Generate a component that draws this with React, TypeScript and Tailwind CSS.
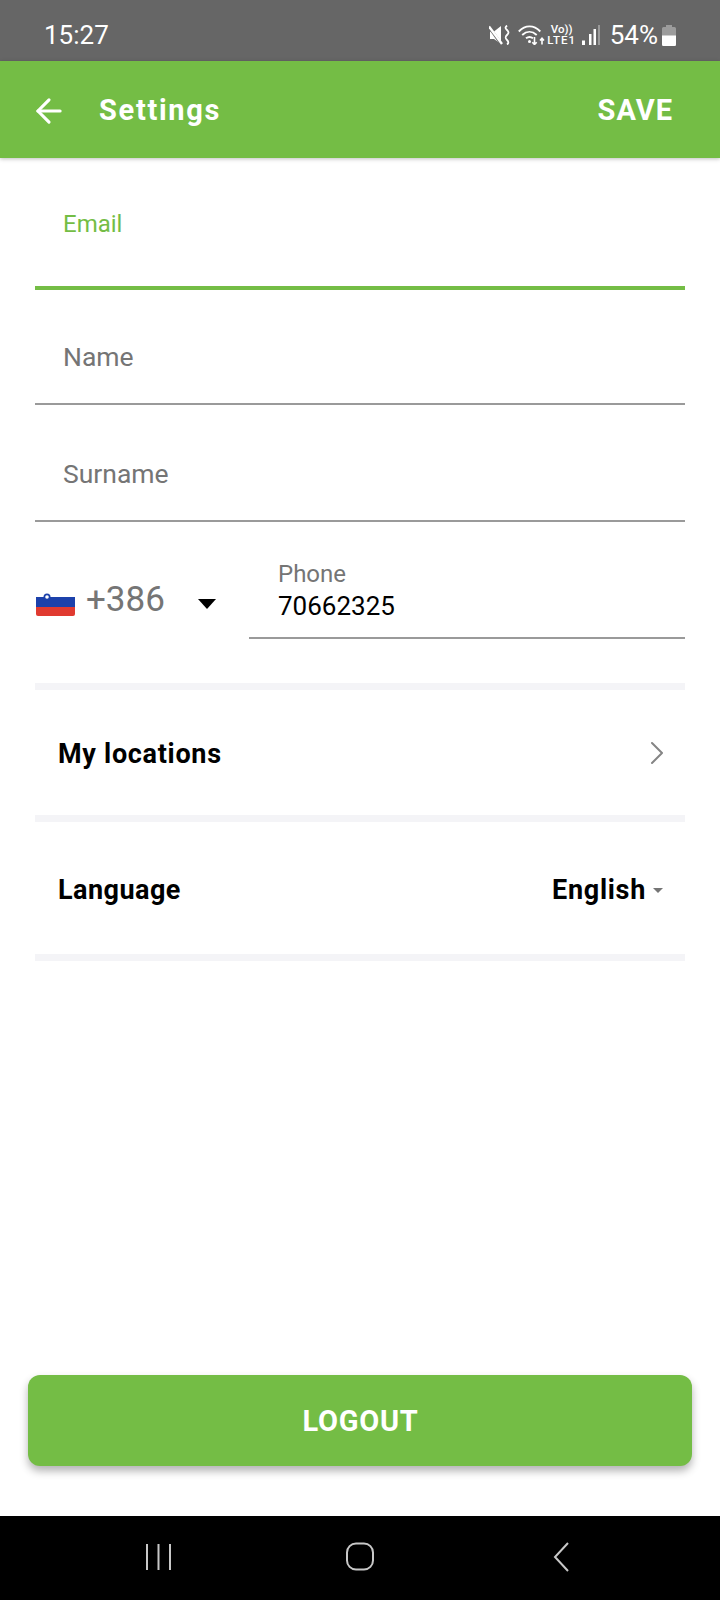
import { ArrowLeft, ChevronRight } from "lucide-react";

const Field = ({ label, className }: { label: string; className: string }) => {
  return (
    <div className={`mx-[35px] border-b-2 border-[#9a9a9a] pl-[28px] ${className}`}>
      <span className="block text-[26.5px] leading-[30px] text-[#757575]">{label}</span>
    </div>
  );
};

const Divider = () => <div className="mx-[35px] h-[7px] bg-[#f4f4f7]" />;

const StatusIcons = () => {
  return (
    <div className="flex items-center">
      {/* muted */}
      <svg width="21" height="20" viewBox="0 0 21 20" fill="none" className="mr-[8px]">
        <path d="M1 6.500h4l7-5.500v18l-7-5H1z" fill="#fff" />
        <path d="M0.500 2.500l12 17" stroke="#666" strokeWidth="3" />
        <path d="M0 1.500l13 17.500" stroke="#fff" strokeWidth="2.400" />
        <path d="M18 0.500c-2 1.800-2 2.500 0 4.500s2 3 0 5-2 3 0 5 1.500 3.500 0 4.500" stroke="#fff" strokeWidth="1.800" />
      </svg>
      {/* wifi */}
      <svg width="27" height="20" viewBox="0 0 27 20" fill="none" className="mr-[4px]">
        <path d="M0.800 6.500c6.500-6.800 15-6.800 21.500 0" stroke="#fff" strokeWidth="1.900" />
        <path d="M4.200 10c4.500-4.200 10-4.200 14.500 0" stroke="#fff" strokeWidth="1.900" />
        <path d="M8 13.300c2.500-2 4.500-2 7 0" stroke="#fff" strokeWidth="1.900" />
        <circle cx="11.500" cy="16.500" r="1.500" fill="#fff" />
        <path d="M16.500 12v7.500m-2.200-2.200l2.200 2.200 2.200-2.200M24 19.500v-6m-2 2l2-2.200 2 2.200" stroke="#fff" strokeWidth="1.600" />
      </svg>
      <div className="mr-[7px] flex w-[26px] flex-col items-center text-[11.500px] leading-[11.500px] font-medium text-white">
        <span>Vo))</span>
        <span className="tracking-[1px]">LTE1</span>
      </div>
      {/* signal */}
      <svg width="18" height="20" viewBox="0 0 18 20" className="mr-[10px]">
        <rect x="0" y="15.500" width="3" height="4.500" fill="#fff" />
        <rect x="7" y="9" width="2.500" height="11" fill="#fff" />
        <rect x="11.500" y="4" width="2.500" height="16" fill="#fff" />
        <rect x="16" y="0" width="2" height="20" fill="#9a9a9a" />
      </svg>
      <span className="text-[26px] leading-none text-white">54%</span>
      {/* battery */}
      <svg width="14" height="21" viewBox="0 0 14 21" className="ml-[4px]">
        <path d="M4 0h6v2h2.500A1.500 1.500 0 0 1 14 3.500V19.500a1.500 1.500 0 0 1-1.500 1.500h-11A1.500 1.500 0 0 1 0 19.500V3.500A1.500 1.500 0 0 1 1.500 2H4z" fill="#9c9c9c" />
        <path d="M0 10.500h14v9a1.500 1.500 0 0 1-1.500 1.500h-11A1.500 1.500 0 0 1 0 19.500z" fill="#fff" />
      </svg>
    </div>
  );
};

const App = () => {
  return (
    <div className="flex h-[1600px] w-[720px] flex-col overflow-hidden bg-white font-['Roboto',sans-serif]">
      <div className="flex h-[61px] items-center justify-between bg-[#666666] pt-[9px] pr-[44px] pl-[44px]">
        <span className="text-[26px] leading-none text-white">15:27</span>
        <StatusIcons />
      </div>

      <header className="flex h-[97px] items-center bg-[#74bd45] pt-[2px] pr-[47px] pl-[30px] shadow-[0_1px_4px_rgba(0,0,0,0.25)]">
        <ArrowLeft size={38} strokeWidth={2} className="text-white" />
        <h1 className="ml-[31px] text-[29px] font-bold tracking-[1.7px] text-white">Settings</h1>
        <span className="ml-auto text-[29px] font-bold tracking-[1px] text-white">SAVE</span>
      </header>

      <div className="mx-[35px] mt-[52px] h-[80px] border-b-4 border-[#74bd45] pt-[1px] pl-[28px]">
        <span className="block text-[24px] leading-[26px] text-[#74bd45]">Email</span>
      </div>

      <Field label="Name" className="mt-[48px] h-[67px] pt-[4px]" />
      <Field label="Surname" className="mt-[50px] h-[67px] pt-[4px]" />

      <div className="mt-[39px] ml-[35px] flex h-[78px] items-start">
        <div className="mt-[21px] flex w-[214px] items-center">
          <svg width="39" height="28" viewBox="0 0 39 28" className="mt-[5px] ml-[1px]">
            <rect y="9" width="39" height="10" fill="#1c41ab" />
            <path d="M0 19h39v7a2 2 0 0 1-2 2H2a2 2 0 0 1-2-2z" fill="#e03a30" />
            <circle cx="11" cy="9" r="3.500" fill="#1c41ab" />
            <circle cx="11" cy="9" r="1.800" fill="#fff" />
          </svg>
          <span className="ml-[11px] text-[35px] leading-none text-[#757575]">+386</span>
          <span className="mt-[8px] ml-[33px] h-0 w-0 border-x-[9px] border-t-[10px] border-x-transparent border-t-black" />
        </div>
        <div className="mr-[35px] h-[78px] flex-1 border-b-2 border-[#9a9a9a] pl-[29px]">
          <span className="block text-[24px] leading-[26px] text-[#757575]">Phone</span>
          <span className="mt-[3px] block text-[26px] leading-[32px] text-black">70662325</span>
        </div>
      </div>

      <div className="mt-[44px]">
        <Divider />
      </div>
      <div className="mx-[35px] flex h-[125px] items-center justify-between pt-[4px] pr-[8px] pl-[23px]">
        <span className="text-[27px] font-bold tracking-[0.7px] text-black">My locations</span>
        <ChevronRight size={40} strokeWidth={1.2} className="-mt-[4px] text-[#858585]" />
      </div>
      <Divider />
      <div className="mx-[35px] flex h-[132px] items-center justify-between pt-[5px] pr-[22px] pl-[23px]">
        <span className="text-[27px] font-bold tracking-[0.45px] text-black">Language</span>
        <div className="flex items-center">
          <span className="text-[27px] font-bold tracking-[0.7px] text-black">English</span>
          <span className="ml-[7px] h-0 w-0 border-x-[5px] border-t-[5px] border-x-transparent border-t-[#757575]" />
        </div>
      </div>
      <Divider />

      <div className="flex-1" />

      <button className="mx-[28px] mb-[50px] h-[91px] rounded-[12px] bg-[#74bd45] pt-[3px] pl-[1px] text-[29px] font-bold tracking-[0.7px] text-white shadow-[0_5px_8px_rgba(0,0,0,0.3)]">
        LOGOUT
      </button>

      <nav className="flex h-[84px] items-center justify-center bg-black">
        <svg width="720" height="84" viewBox="0 0 720 84" fill="none" stroke="#c8c8c8" strokeWidth="2">
          <path d="M147 28v26M158.500 28v26M170 28v26" />
          <rect x="347" y="27.500" width="26" height="26" rx="9" />
          <path d="M568 27l-13 14 13 14" />
        </svg>
      </nav>
    </div>
  );
};

export default App;
